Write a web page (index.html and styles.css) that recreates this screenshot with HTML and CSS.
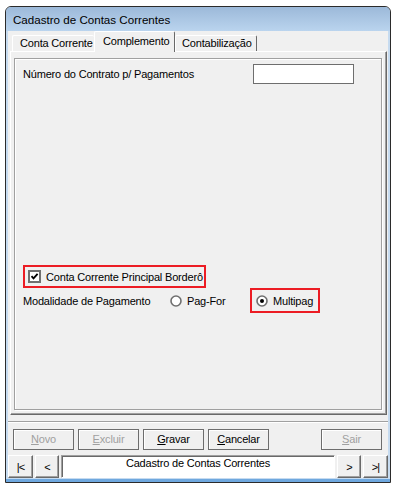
FILE: index.html
```html
<!DOCTYPE html>
<html>
<head>
<meta charset="utf-8">
<link rel="stylesheet" href="styles.css">
</head>
<body>
<div class="win">
  <div class="title">Cadastro de Contas Correntes</div>
  <div class="client">
    <div class="tabs">
      <div class="tab tab-first">Conta Corrente</div>
      <div class="tab tab-active">Complemento</div>
      <div class="tab tab-last">Contabilização</div>
    </div>
    <div class="tabctl">
      <div class="page">
        <div class="row-contract">
          <span class="lbl-contract">Número do Contrato p/ Pagamentos</span>
          <span class="edit"></span>
        </div>
        <div class="hl hl-check">
          <span class="chk"><svg width="9" height="9" viewBox="0 0 9 9"><polyline points="1.5,4.2 3.5,6.4 7.6,1.8" fill="none" stroke="#000" stroke-width="1.8"/></svg></span>
          <span>Conta Corrente Principal Borderô</span>
        </div>
        <div class="row-mod">
          <span class="lbl-mod">Modalidade de Pagamento</span>
          <span class="opt opt-pagfor">
            <svg class="radio" width="12" height="12" viewBox="0 0 12 12"><circle cx="6" cy="6" r="5" fill="#fff" stroke="#6f6f6f" stroke-width="1.6"/></svg>
            <span>Pag-For</span>
          </span>
          <span class="hl hl-radio">
            <svg class="radio" width="12" height="12" viewBox="0 0 12 12"><circle cx="6" cy="6" r="5" fill="#fff" stroke="#6f6f6f" stroke-width="1.6"/><circle cx="6" cy="6" r="2" fill="#000"/></svg>
            <span>Multipag</span>
          </span>
        </div>
      </div>
    </div>
    <div class="btnbar">
      <div class="btn btn-dis"><u>N</u>ovo</div>
      <div class="btn btn-dis"><u>E</u>xcluir</div>
      <div class="btn"><u>G</u>ravar</div>
      <div class="btn"><u>C</u>ancelar</div>
      <div class="grow"></div>
      <div class="btn btn-dis"><u>S</u>air</div>
    </div>
    <div class="nav">
      <div class="navbtn nav-wide">|&lt;</div>
      <div class="navbtn">&lt;</div>
      <div class="navfield">Cadastro de Contas Correntes</div>
      <div class="navbtn">&gt;</div>
      <div class="navbtn nav-wide">&gt;|</div>
    </div>
  </div>
</div>
</body>
</html>
```

FILE: styles.css
```css
* { box-sizing: border-box; }
html, body { margin: 0; padding: 0; background: #fff; }
body {
  font-family: "Liberation Sans", Arial, sans-serif;
  font-size: 11px;
  letter-spacing: -0.18px;
  color: #000;
}
.win {
  margin: 6px 0 0 5px;
  width: 386px;
  height: 477px;
  border: 1px solid #2b2b2b;
  border-radius: 6px 6px 0 0;
  background: linear-gradient(to bottom, #c6dbf0 calc(100% - 3px), #6fa8df calc(100% - 3px));
  padding: 0 2px;
  display: flex;
  flex-direction: column;
  overflow: hidden;
}
.title {
  height: 24px;
  margin: 0 -2px;
  padding: 3px 0 0 7px;
  line-height: 19px;
  font-size: 11.6px;
  letter-spacing: 0;
  background: linear-gradient(to bottom, #9cb9d9, #bad4ee);
  flex: none;
}
.client {
  width: 380px;
  height: 447px;
  background: #f0f0f0;
  display: flex;
  flex-direction: column;
  flex: none;
}
.tabs {
  height: 20px;
  display: flex;
  align-items: flex-end;
  padding-left: 4px;
  flex: none;
}
.tab {
  height: 16px;
  line-height: 14px;
  border-top: 1px solid #fff;
  border-left: 1px solid #fff;
  border-right: 1px solid #696969;
  border-radius: 2px 2px 0 0;
  white-space: nowrap;
  background: #f0f0f0;
}
.tab-first { width: 82px; padding-left: 7px; border-right: none; }
.tab-active {
  width: 81px;
  height: 21px;
  padding-left: 8px;
  line-height: 18px;
  margin-bottom: -1px;
  position: relative;
  z-index: 1;
}
.tab-last { width: 82px; padding-left: 6px; }
.tabctl {
  margin-left: 2px;
  width: 377px;
  height: 364px;
  border: 1px solid;
  border-color: #fff #696969 #696969 #fff;
  box-shadow: inset -1px -1px 0 #a0a0a0;
  padding: 6px 0 0 3px;
  flex: none;
}
.page {
  width: 368px;
  height: 352px;
  border: 1px solid #a0a0a0;
  box-shadow: 1px 1px 0 #fff, inset 1px 1px 0 #fff;
  padding-left: 8px;
  display: flex;
  flex-direction: column;
}
.row-contract {
  margin-top: 5px;
  height: 20px;
  display: flex;
  align-items: center;
}
.lbl-contract { width: 230px; white-space: nowrap; }
.edit {
  width: 101px;
  height: 20px;
  background: #fff;
  border: 1px solid #6e6e6e;
}
.hl { border: 2px solid #ec1c24; display: flex; align-items: center; white-space: nowrap; }
.hl-check {
  margin-top: 181px;
  width: 183px;
  height: 23px;
  padding-left: 3px;
  gap: 5px;
}
.chk {
  width: 13px;
  height: 13px;
  background: #fff;
  border: 2px solid #707070;
  display: flex;
  align-items: center;
  justify-content: center;
}
.chk svg { display: block; }
.row-mod {
  height: 25px;
  display: flex;
  align-items: center;
  white-space: nowrap;
}
.lbl-mod { width: 147px; }
.opt { display: flex; align-items: center; gap: 5px; }
.opt-pagfor { width: 80px; }
.radio { display: block; flex: none; }
.hl-radio {
  width: 70px;
  height: 25px;
  padding-left: 4px;
  gap: 5px;
}
.btnbar {
  margin-top: 6px;
  border-top: 1px solid #a0a0a0;
  box-shadow: inset 0 1px 0 #fff;
  padding: 7px 6px 0 5px;
  height: 29px;
  display: flex;
  gap: 4px;
  flex: none;
}
.grow { flex: 1; }
.btn {
  width: 61px;
  height: 21px;
  border: 1px solid #6d6d6d;
  box-shadow: inset 1px 1px 0 #fff;
  display: flex;
  align-items: center;
  justify-content: center;
  padding-bottom: 1px;
}
.btn-dis { color: #a0a0a0; }
.nav {
  margin-top: 5px;
  height: 23px;
  display: flex;
  gap: 2px;
  flex: none;
}
.navbtn {
  width: 24px;
  height: 23px;
  border: 1px solid;
  border-color: #fff #696969 #696969 #fff;
  box-shadow: inset -1px -1px 0 #a0a0a0;
  display: flex;
  align-items: center;
  justify-content: center;
  padding-top: 1px;
  letter-spacing: -1px;
}
.nav-wide { width: 25px; }
.navfield {
  width: 274px;
  height: 23px;
  background: #fff;
  border: 1px solid;
  border-color: #a0a0a0 #fff #fff #a0a0a0;
  box-shadow: inset 1px 1px 0 #696969;
  text-align: center;
  line-height: 14px;
  padding-top: 0;
}
```
